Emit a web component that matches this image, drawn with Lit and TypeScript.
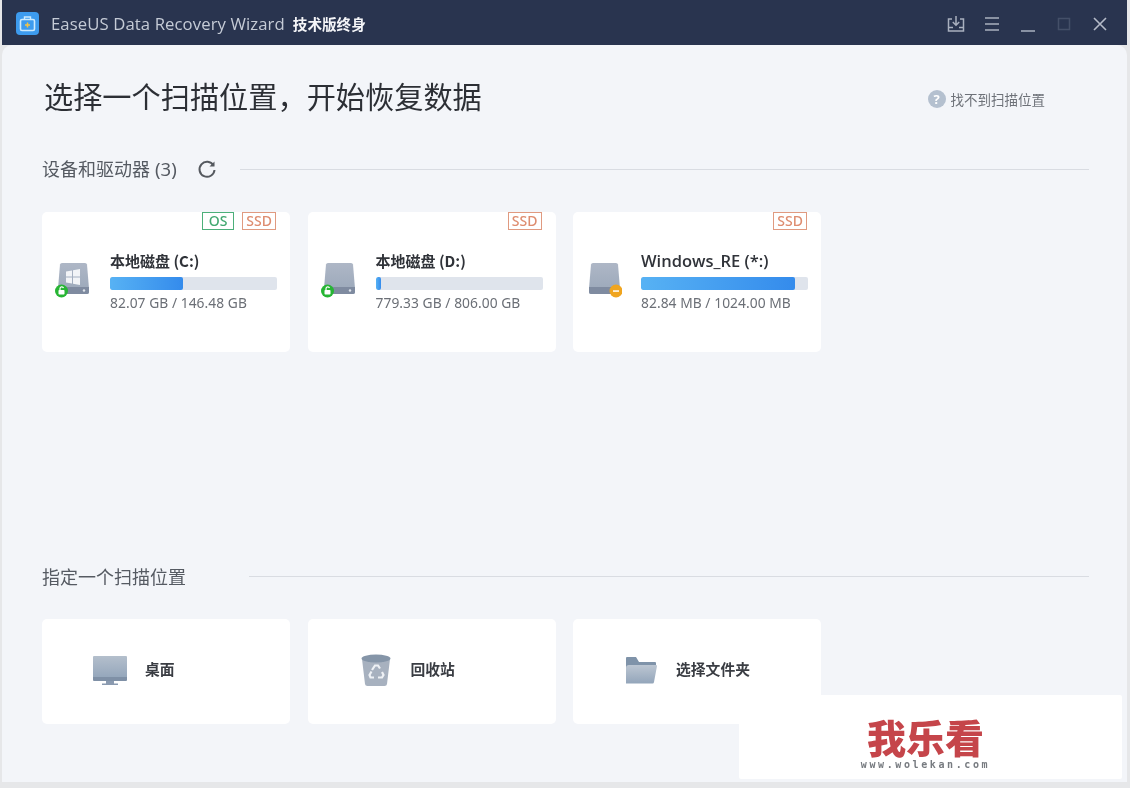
import { LitElement, html, css, svg } from "lit";
import { customElement } from "lit/decorators.js";

const defs = svg`<svg width="0" height="0" style="position:absolute"><defs>
<linearGradient id="disk" x1="0" y1="0" x2="0" y2="1"><stop offset="0" stop-color="#aeb7c6"/><stop offset="1" stop-color="#9aa7b9"/></linearGradient>
<linearGradient id="screen" x1="0" y1="0" x2="0" y2="1"><stop offset="0" stop-color="#b4bfcc"/><stop offset="1" stop-color="#94a6bb"/></linearGradient>
<linearGradient id="folder" x1="0" y1="0" x2="0" y2="1"><stop offset="0" stop-color="#bcc6d2"/><stop offset="1" stop-color="#93a5ba"/></linearGradient>
</defs></svg>`;

function diskIcon(win: boolean, status: "ok" | "warn") {
  return html`<svg class="disk" width="38" height="38" viewBox="0 0 38 38">
    <path d="M7 3.5q.3-1.500 2-1.500h23q1.700 0 2 1.500l2 24v3.500q0 2-2 2h-27q-2 0-2-2v-3.500z" fill="url(#disk)"/>
    <path d="M5 26h31v5q0 2-2 2h-27q-2 0-2-2z" fill="#7f8ba0"/>
    <circle cx="31" cy="29.500" r="1.200" fill="#dfe4ea"/>
    ${win ? svg`<path d="M13 10.500l6-1v6h-6zM20 9.300l7-1.300v7.500h-7zM13 16.500h6v6l-6-1zM20 16.500h7v7.500l-7-1.300z" fill="#f2f4f7"/>` : ""}
    ${status === "ok"
      ? svg`<circle cx="8.500" cy="30" r="6.500" fill="#27b534"/><rect x="5.500" y="29" width="6" height="4.500" rx=".8" fill="#fff"/><path d="M7 29v-1.500a1.800 1.800 0 0 1 3.500-.5" fill="none" stroke="#fff" stroke-width="1.200"/>`
      : svg`<circle cx="32" cy="30" r="6.500" fill="#f0a51f"/><rect x="29" y="29.300" width="6" height="1.500" fill="#fff"/>`}
  </svg>`;
}

const drives = [
  { name: "本地磁盘 (C:)", size: "82.07 GB / 146.48 GB", pct: 44, os: true, win: true, st: "ok" as const },
  { name: "本地磁盘 (D:)", size: "779.33 GB / 806.00 GB", pct: 3.5, os: false, win: false, st: "ok" as const },
  { name: "Windows_RE (*:)", size: "82.84 MB / 1024.00 MB", pct: 92, os: false, win: false, st: "warn" as const },
];

const monitor = html`<svg width="36" height="30" viewBox="0 0 36 30">
  <path d="M1 2q0-1 1-1h32q1 0 1 1v21H1z" fill="url(#screen)"/>
  <path d="M1 22h34v3q0 1-1 1H2q-1 0-1-1z" fill="#7f90a6"/>
  <path d="M14 26h8v2.500h4v1.500H10v-1.500h4z" fill="#8a9ab0"/>
</svg>`;
const bin = html`<svg width="30" height="32" viewBox="0 0 30 32">
  <path d="M1 5l3 25q.2 2 2.500 2h17q2.300 0 2.500-2l3-25z" fill="#a7b1bf"/>
  <ellipse cx="15" cy="4.500" rx="14.500" ry="4" fill="#8595a8"/>
  <g fill="none" stroke="#eef1f5" stroke-width="2.200"><path d="M11 16l3-4.500h3l2 3"/><path d="M21 18l1.500 3-1.500 2.500h-4"/><path d="M13 23.500H9.500L8.500 21l2-3.500"/></g>
</svg>`;
const folder = html`<svg width="32" height="28" viewBox="0 0 32 28">
  <path d="M1 2q0-1 1-1h9l3 5h16q1 0 1 1v6H1z" fill="#7f93a9"/>
  <path d="M4 9h27q1 0 1 1l-3 16q-.2 1.500-1.500 1.500H1V12q0-3 3-3z" fill="url(#folder)"/>
</svg>`;

@customElement("app-root")
export class AppRoot extends LitElement {
  static styles = css`
    :host { display: block; width: 1130px; height: 788px; overflow: hidden; position: relative;
      background: #e6e7e9; font-family: "Noto Sans CJK SC", "Noto Sans", sans-serif; }
    .frame { height: 782px; margin: 0 3px 0 2px; display: flex; flex-direction: column; filter: blur(0.4px); }
    .titlebar { height: 45px; box-sizing: border-box; flex: none; background: #29344f; display: flex; align-items: center; padding: 2px 17px 0 14px; }
    .logo { margin-right: 12px; display: block; }
    .app { font: 500 16.700px "Open Sans", sans-serif; color: #c5cbd6; letter-spacing: .1px; }
    .edition { font: 700 14.600px "Noto Sans CJK SC", sans-serif; color: #f4f5f8; margin-left: 8px; }
    .ctrls { margin-left: auto; display: flex; gap: 16px; }
    .ctrls svg { display: block; }
    .main { flex: 1; background: #f3f5f9; border-radius: 10px 10px 0 0; padding: 0 38px 0 40px; display: flex; flex-direction: column; }
    .head { display: flex; align-items: center; justify-content: space-between; height: 101px; padding-left: 2px; padding-right: 44px; flex: none; }
    h1 { margin: 0; font: 400 29.200px/1 "Noto Sans CJK SC", sans-serif; color: #2c2f35; }
    .help { display: flex; align-items: center; gap: 5px; font-size: 13.500px; color: #6d7178; margin-top: 6px; }
    .help i { width: 18px; height: 18px; border-radius: 50%; background: #b4c0cf; color: #fff; font: 700 13px/18px "Noto Sans", sans-serif; text-align: center; }
    .section { display: flex; align-items: center; height: 46px; flex: none; }
    .section h2 { margin: 0; font: 400 18px/1 "Noto Sans CJK SC", sans-serif; color: #555a62; white-space: nowrap; }
    .section h2 small { font: 400 18.500px/1 "Noto Sans", sans-serif; margin-left: 1px; }
    .section svg { margin-left: 20px; display: block; }
    .section .rule { flex: 1; height: 1px; background: #d9dce2; margin-left: 23px; }
    .section.second { margin-top: 201px; }
    .section.second .rule { margin-left: 63px; }
    .devices { display: flex; gap: 17.500px; margin-top: 20px; height: 140px; flex: none; }
    .card { width: 248px; background: #fff; border-radius: 5px; box-sizing: border-box; position: relative; }
    .drive { display: flex; padding: 40px 13px 0 11px; }
    .disk { margin-top: 9px; flex: none; }
    .info { margin-left: 19px; flex: 1; min-width: 0; }
    .name { font: 700 15px/18px "Noto Sans CJK SC", "Open Sans", sans-serif; color: #303339; }
    .win { font-family: "Open Sans", sans-serif; font-weight: 600; font-size: 16.500px; }
    .bar { height: 13px; background: #dfe4ec; border-radius: 2px; margin-top: 7px; overflow: hidden; }
    .fill { height: 100%; border-radius: 2px; background: linear-gradient(90deg, #57b2f4, #348bec); }
    .size { font: 400 13.800px/18px "Noto Sans", sans-serif; color: #6b6f76; margin-top: 4px; letter-spacing: .05px; }
    .tags { position: absolute; top: 0; right: 14px; display: flex; gap: 8px; }
    .tag { height: 18px; box-sizing: border-box; border: 1px solid #e09a80; color: #de8d70; font: 500 14px/16px "Noto Sans", sans-serif; padding: 0 3px; }
    .tag.os { border-color: #4caf7a; color: #43a871; padding: 0 6px; }
    .places { display: flex; gap: 17.500px; margin-top: 20px; height: 105px; flex: none; }
    .place { display: flex; align-items: center; height: 100%; padding-bottom: 4px; }
    .place .ico { width: 70px; padding-left: 33px; display: flex; justify-content: center; flex: none; }
    .place span { font: 700 14.800px/1 "Noto Sans CJK SC", sans-serif; color: #3a3d43; }
    .watermark { position: absolute; left: 739px; top: 695px; width: 383px; height: 84px; background: #fff; border-radius: 2px; display: flex; flex-direction: column; align-items: center; padding-right: 10px; box-sizing: border-box; filter: blur(0.4px); }
    .wm1 { font: 900 39px/38px "Liberation Sans", "Noto Sans CJK SC", sans-serif; color: #c5454a; margin-top: 26px; }
    .wm2 { font: 700 10px/12px "DejaVu Sans Mono", monospace; color: #777b80; letter-spacing: 2.600px; margin-top: 0; }
  `;

  render() {
    return html`${defs}
      <div class="frame">
        <div class="titlebar">
          <svg class="logo" width="23" height="23" viewBox="0 0 23 23">
            <rect width="23" height="23" rx="4" fill="#3d9bee"/>
            <rect x="4.500" y="7.500" width="14" height="11" rx="1.500" fill="none" stroke="#cdeafd" stroke-width="1.600"/>
            <path d="M8.500 7.500V5h6v2.500" fill="none" stroke="#cdeafd" stroke-width="1.400"/>
            <path d="M11.500 10.500v5M9 13h5" stroke="#f6c343" stroke-width="1.500"/>
          </svg>
          <span class="app">EaseUS Data Recovery Wizard</span>
          <span class="edition">技术版终身</span>
          <div class="ctrls">
            <svg width="20" height="20" viewBox="0 0 20 20" fill="none" stroke="#a9b0bf" stroke-width="1.500"><path d="M6 5H2.500v12h15V5H14"/><path d="M10 2v9M6.800 8l3.200 3.200L13.200 8M2.500 13.500h4.500M13 13.500h4.500"/></svg>
            <svg width="20" height="20" viewBox="0 0 20 20" stroke="#a9b0bf" stroke-width="1.500"><path d="M3 4h14M3 10h14M3 16h14"/></svg>
            <svg width="20" height="20" viewBox="0 0 20 20" stroke="#a9b0bf" stroke-width="1.500"><path d="M3 17h14"/></svg>
            <svg width="20" height="20" viewBox="0 0 20 20" fill="none" stroke="#444f68" stroke-width="1.500"><path d="M4.500 4.500h11v11h-11z"/></svg>
            <svg width="20" height="20" viewBox="0 0 20 20" stroke="#b5bbc8" stroke-width="1.600"><path d="M4 4l12 12M16 4L4 16"/></svg>
          </div>
        </div>
        <div class="main">
          <div class="head">
            <h1>选择一个扫描位置，开始恢复数据</h1>
            <div class="help"><i>?</i>找不到扫描位置</div>
          </div>
          <div class="section">
            <h2>设备和驱动器 <small>(3)</small></h2>
            <svg width="20" height="20" viewBox="0 0 20 20" fill="none" stroke="#55595f" stroke-width="2"><path d="M16.500 6.500A7.500 7.500 0 1 0 17.500 11"/><path d="M17.500 2.500v5h-5" fill="#55595f" stroke="none"/></svg>
            <div class="rule"></div>
          </div>
          <div class="devices">
            ${drives.map((d) => html`<div class="card">
              <div class="tags">
                ${d.os ? html`<div class="tag os">OS</div>` : ""}
                <div class="tag">SSD</div>
              </div>
              <div class="drive">
                ${diskIcon(d.win, d.st)}
                <div class="info">
                  <div class="name ${d.name.startsWith("Win") ? "win" : ""}">${d.name}</div>
                  <div class="bar"><div class="fill" style="width:${d.pct}%"></div></div>
                  <div class="size">${d.size}</div>
                </div>
              </div>
            </div>`)}
          </div>
          <div class="section second">
            <h2>指定一个扫描位置</h2>
            <div class="rule"></div>
          </div>
          <div class="places">
            <div class="card place"><div class="ico">${monitor}</div><span>桌面</span></div>
            <div class="card place"><div class="ico">${bin}</div><span>回收站</span></div>
            <div class="card place"><div class="ico">${folder}</div><span>选择文件夹</span></div>
          </div>
        </div>
      </div>
      <div class="watermark">
        <div class="wm1">我乐看</div>
        <div class="wm2">www.wolekan.com</div>
      </div>`;
  }
}
